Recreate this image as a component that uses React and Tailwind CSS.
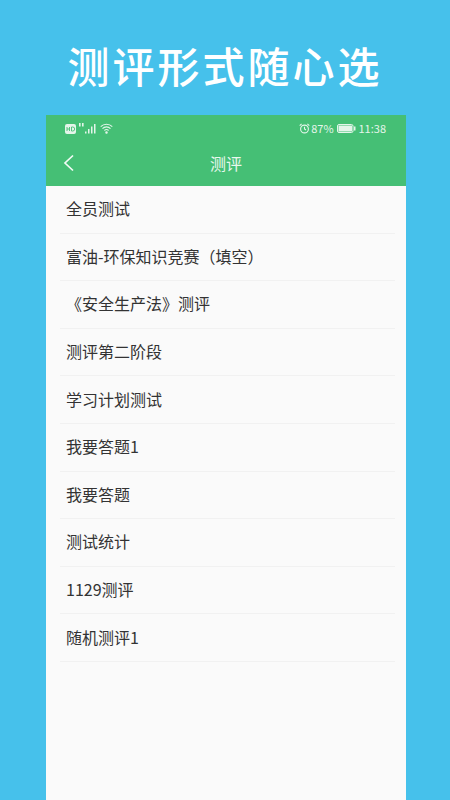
import React from "react";

const items = [
  "全员测试",
  "富油-环保知识竞赛（填空）",
  "《安全生产法》测评",
  "测评第二阶段",
  "学习计划测试",
  "我要答题1",
  "我要答题",
  "测试统计",
  "1129测评",
  "随机测评1",
];

const StatusBar = () => {
  return (
    <div className="h-[27px] flex items-center justify-between pl-[19px] pr-[20px] text-[11px] text-[#e4f5ea]">
      <div className="flex items-center gap-[3px]">
        <svg width="11" height="10" viewBox="0 0 11 10">
          <rect width="11" height="10" rx="2" fill="#e4f5ea" />
          <path d="M2 3v4M2 5h2.5M4.5 3v4M6.5 3v4h1.2a2 2 0 0 0 0-4z" stroke="#45bf75" strokeWidth="0.9" fill="none" />
        </svg>
        <svg width="18" height="11" viewBox="0 0 18 11" fill="#e4f5ea">
          <rect x="0" y="0" width="1.6" height="3.5" />
          <rect x="3" y="0" width="1.6" height="3.5" />
          <rect x="6" y="8.5" width="1.5" height="2" />
          <rect x="9" y="6" width="1.5" height="4.5" />
          <rect x="12" y="3.5" width="1.5" height="7" />
          <rect x="15" y="1" width="1.5" height="9.5" />
        </svg>
        <svg width="13" height="11" viewBox="0 0 13 11" fill="none" stroke="#e4f5ea" strokeWidth="1.1">
          <path d="M.7 3.6a8.2 8.2 0 0 1 11.6 0" />
          <path d="M2.5 5.6a5.6 5.6 0 0 1 8 0" />
          <path d="M4.4 7.5a3 3 0 0 1 4.2 0" />
          <circle cx="6.5" cy="9.6" r=".7" fill="#e4f5ea" />
        </svg>
      </div>
      <div className="flex items-center">
        <svg width="11" height="11" viewBox="0 0 11 11" fill="none" stroke="#e4f5ea" strokeWidth="1.1">
          <circle cx="5.5" cy="6" r="3.9" />
          <path d="M5.5 3.8V6l1.5 1M.7 2.6 2.6.8M10.3 2.6 8.4.8" />
        </svg>
        <span className="ml-[1px] leading-none">87%</span>
        <svg className="ml-[3px]" width="19" height="9" viewBox="0 0 19 9">
          <rect x=".5" y=".5" width="15.5" height="8" rx="1.5" fill="none" stroke="#e4f5ea" />
          <rect x="1.5" y="1.5" width="13.5" height="6" fill="#e4f5ea" />
          <rect x="17" y="2.5" width="1.5" height="4" fill="#e4f5ea" />
        </svg>
        <span className="ml-[3px] leading-none">11:38</span>
      </div>
    </div>
  );
};

const App = () => {
  return (
    <div className="w-[450px] h-[800px] overflow-hidden bg-[#46c1eb] flex flex-col items-center font-['Noto_Sans_CJK_SC','Noto_Sans',sans-serif]">
      <h1 className="h-[115px] pt-[14px] flex items-center text-white text-[42px] leading-none tracking-[3px] font-medium">
        测评形式随心选
      </h1>
      <div className="w-[360px] flex-1 bg-[#fafafa] ml-[2px]">
        <div className="h-[71px] bg-[#45bf75]">
          <StatusBar />
          <div className="relative h-[44px] flex items-center justify-center pb-[3px]">
            <svg className="absolute left-[16px] top-[12px]" width="12" height="18" viewBox="0 0 12 18" fill="none" stroke="#f2fbf5" strokeWidth="1.7">
              <path d="M11 1.5 3 9l8 7.5" />
            </svg>
            <span className="text-[#e9f8ee] text-[16px] leading-none">测评</span>
          </div>
        </div>
        <ul className="flex flex-col">
          {items.map((item) => (
            <li
              key={item}
              className="h-[47.6px] ml-[14px] mr-[11px] pl-[6px] pb-[2px] flex items-center border-b border-[#f1f1f1] text-[#333333] text-[16px] leading-none"
            >
              {item}
            </li>
          ))}
        </ul>
      </div>
    </div>
  );
};

export default App;
